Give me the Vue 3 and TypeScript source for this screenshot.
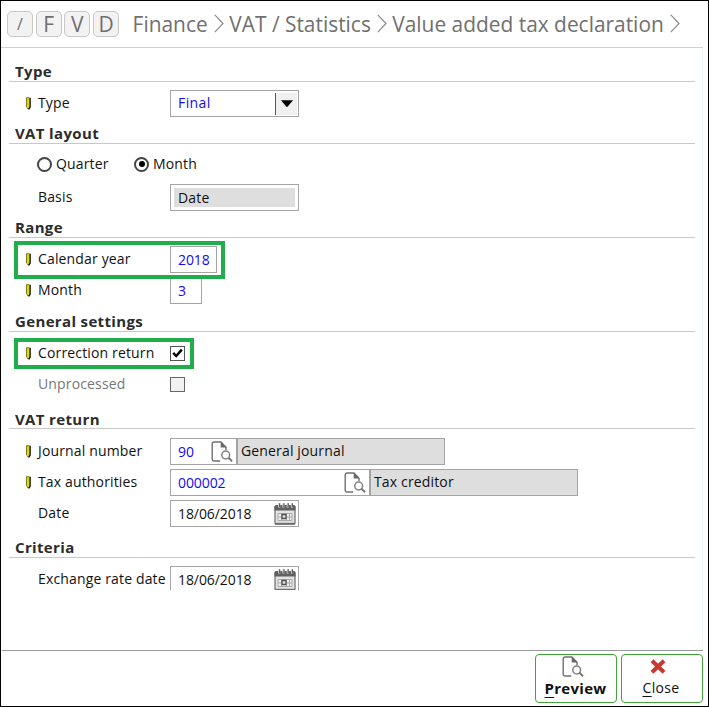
<script setup lang="ts">
import { ref } from 'vue'

const keys = ['/', 'F', 'V', 'D']
const crumbs = [
  { text: 'Finance', cls: 'c1' },
  { text: 'VAT / Statistics', cls: 'c2' },
  { text: 'Value added tax declaration', cls: 'c3' },
]
const period = ref<'quarter' | 'month'>('month')
const correction = ref(true)
</script>

<template>
  <svg class="defs" width="0" height="0" aria-hidden="true">
    <symbol id="pencil" viewBox="0 0 5 13">
      <path d="M.4.5H4v9.2L2.4 12.5.4 10Z" fill="#e0d800" />
      <path d="M.5 10V.7H3M1 10.5l1.2 1.7" fill="none" stroke="#66620c" stroke-width=".8" />
      <path d="M4.1 .8v9.4L2.6 12.3" fill="none" stroke="#000" stroke-width="1.3" />
    </symbol>
    <symbol id="lookup" viewBox="0 0 22 22">
      <path d="M9.2 20H3.2Q1.2 20 1.2 18V3Q1.2 1 3.2 1H10L15 6.2V9" fill="none" stroke="#707070" stroke-width="1.4" />
      <path d="M9.7.8V6.6H15.6Z" fill="#686868" />
      <circle cx="14.7" cy="14" r="3.9" fill="#fff" stroke="#808080" stroke-width="1.5" />
      <path d="M17.5 16.8 21 20.2" stroke="#777" stroke-width="2" />
    </symbol>
    <symbol id="calendar" viewBox="0 0 22 22">
      <path d="M2.5 3H19.5Q21 3 21 4.5V20Q21 21 20 21H2Q1 21 1 20V4.5Q1 3 2.5 3Z" fill="#e2e2e2" stroke="#777" stroke-width="1.3" />
      <path d="M.5 3.5Q.5 2 2.5 2H19.5Q21.5 2 21.5 3.5V7.5H.5Z" fill="#606060" />
      <path d="M5.2 0v4.5M9.5 0v4.5M13.8 0v4.5M18 0v4.5" stroke="#ddd" stroke-width="2.2" />
      <path d="M5.6.3v4M9.9.3v4M14.2.3v4M18.4.3v4" stroke="#606060" stroke-width="1.3" />
      <path d="M1 20.7H21" stroke="#707070" stroke-width="1.8" />
      <path d="M4 10.5H18V17.5H4ZM4 14H18M7.5 10.5V17.5M12.5 10.5V17.5M15.5 10.5V17.5" fill="#eee" stroke="#aaa" stroke-width="1" />
      <path d="M8 11.5h4v4H8Z" fill="#ddd" stroke="#555" stroke-width="1.3" />
    </symbol>
  </svg>

  <main class="window">
    <header class="header">
      <div class="keys">
        <span v-for="k in keys" :key="k" class="key" :class="{ slash: k === '/' }">{{ k }}</span>
      </div>
      <nav class="crumbs">
        <div v-for="c in crumbs" :key="c.text" class="crumb" :class="c.cls">
          <span>{{ c.text }}</span>
          <svg class="chevron" viewBox="0 0 10 19"><path d="M.8.8 9 9.5.8 18.2" fill="none" stroke="#8a8a8a" stroke-width="1.2" /></svg>
        </div>
      </nav>
    </header>

    <div class="form">
      <h2 class="first">Type</h2>
      <div class="row type-row">
        <svg class="pencil"><use href="#pencil" /></svg>
        <label>Type</label>
        <div class="field wide"><span class="blue type-value">Final</span><span class="drop"><svg viewBox="0 0 12 7"><path d="M0 .3H12L6.6 6.7H5.4Z" /></svg></span></div>
      </div>

      <h2>VAT layout</h2>
      <div class="radios">
        <span class="choice quarter" @click="period = 'quarter'"><i class="radio" :class="{ on: period === 'quarter' }"></i>Quarter</span>
        <span class="choice" @click="period = 'month'"><i class="radio" :class="{ on: period === 'month' }"></i>Month</span>
      </div>
      <div class="row basis-row">
        <span class="pencil"></span>
        <label>Basis</label>
        <div class="field wide inset"><span>Date</span></div>
      </div>

      <h2 class="range-head">Range</h2>
      <div class="row year-row">
        <svg class="pencil"><use href="#pencil" /></svg>
        <label>Calendar year</label>
        <div class="field year"><span class="blue num">2018</span></div>
        <div class="mark mark-year"></div>
      </div>
      <div class="row next-row">
        <svg class="pencil"><use href="#pencil" /></svg>
        <label>Month</label>
        <div class="field month"><span class="blue num">3</span></div>
      </div>

      <h2 class="general-head">General settings</h2>
      <div class="row corr-row">
        <svg class="pencil"><use href="#pencil" /></svg>
        <label>Correction return</label>
        <span class="check" @click="correction = !correction">
          <svg v-if="correction" viewBox="0 0 11 11"><path d="M1.2 4.8 4.2 8 9.8 1.7" fill="none" stroke="#000" stroke-width="2.5" /></svg>
        </span>
        <div class="mark mark-corr"></div>
      </div>
      <div class="row next-row off">
        <span class="pencil"></span>
        <label>Unprocessed</label>
        <span class="check"></span>
      </div>

      <h2 class="return-head">VAT return</h2>
      <div class="row journal-row">
        <svg class="pencil"><use href="#pencil" /></svg>
        <label>Journal number</label>
        <div class="field journal"><span class="blue num">90</span><svg class="lookup"><use href="#lookup" /></svg></div>
        <div class="desc">General journal</div>
      </div>
      <div class="row next-row">
        <svg class="pencil"><use href="#pencil" /></svg>
        <label>Tax authorities</label>
        <div class="field tax"><span class="blue num">000002</span><svg class="lookup"><use href="#lookup" /></svg></div>
        <div class="desc">Tax creditor</div>
      </div>
      <div class="row next-row">
        <span class="pencil"></span>
        <label>Date</label>
        <div class="field wide"><span class="num">18/06/2018</span><svg class="cal"><use href="#calendar" /></svg></div>
      </div>

      <h2 class="criteria-head">Criteria</h2>
      <div class="row exchange-row">
        <span class="pencil"></span>
        <label>Exchange rate date</label>
        <div class="field wide"><span class="num">18/06/2018</span><svg class="cal"><use href="#calendar" /></svg></div>
      </div>
    </div>

    <footer class="footer">
      <button class="preview">
        <svg class="lookup"><use href="#lookup" /></svg>
        <span><u>P</u>review</span>
      </button>
      <button class="close">
        <svg class="cross" viewBox="0 0 16 15"><path d="M2 1.8 14 13.2M14 1.8 2 13.2" stroke="#c6392b" stroke-width="4" /></svg>
        <span><u>C</u>lose</span>
      </button>
    </footer>
  </main>
</template>

<style>
body { margin: 0; background: #fff; }
</style>

<style scoped>
* { box-sizing: border-box; }
.defs { display: block; }
.window {
  width: 709px; height: 707px; border: 1px solid #000; background: #fff;
  display: flex; flex-direction: column; overflow: hidden;
  font-family: "Open Sans", "Noto Sans", sans-serif; font-size: 14px; letter-spacing: .15px; color: #111;
}
.header {
  height: 47px; flex: none; margin-right: 5px; padding: 0 0 1px 6px;
  border-bottom: 1px solid #d0d0d0; display: flex; align-items: center; color: #707070; letter-spacing: 0;
}
.keys { display: flex; gap: 2.7px; width: 125.6px; flex: none; }
.key {
  width: 26px; height: 26px; border: 1px solid #c8c8c8; border-radius: 5px; background: #f2f2f2;
  display: flex; align-items: center; justify-content: center; font-size: 21px; line-height: 24px;
}
.key.slash { font-size: 16px; }
.crumbs { display: flex; font-size: 20.9px; line-height: 26px; white-space: nowrap; }
.crumb { display: flex; align-items: center; justify-content: space-between; }
.crumb.c1 { width: 91px; margin-right: 5.7px; }
.crumb.c2 { width: 158px; margin-right: 5px; }
.crumb.c3 { width: 288px; }
.chevron { width: 10px; height: 19px; }
.form {
  height: 602px; flex: none; margin-right: 5px; padding: 0 7px 0 8px; border-right: 1px solid #eef6f8;
}
h2 {
  margin: 0; height: 27px; padding: 6px 0 0 6px; border-bottom: 1px solid #c8c8c8;
  font-size: 15px; line-height: 21px; font-weight: 700; color: #2c2c2c; letter-spacing: .35px;
}
h2.first { height: 34px; padding-top: 13px; }
h2.general-head { height: 28px; padding-top: 7px; }
.row { position: relative; height: 27px; display: flex; align-items: center; padding-left: 17px; }
.pencil { width: 5px; height: 13px; flex: none; }
label { width: 139px; padding-left: 7px; padding-bottom: 2px; white-space: nowrap; }
.type-row { margin-top: 8px; }
.radios { height: 26px; margin-top: 7px; padding-left: 28px; display: flex; align-items: center; }
.choice { display: flex; align-items: center; gap: 4px; line-height: 18px; }
.quarter { width: 97px; }
.radio {
  width: 15px; height: 15px; border: 2px solid #444; border-radius: 50%; background: #fff;
  display: flex; align-items: center; justify-content: center;
}
.radio.on::after { content: ""; width: 6px; height: 6px; border-radius: 50%; background: #000; }
.basis-row { margin-top: 7px; }
.year-row { margin-top: 8px; }
.next-row { margin-top: 4px; }
.corr-row { margin-top: 8px; }
h2.return-head { height: 31px; padding-top: 11px; }
.journal-row { margin-top: 9px; }
h2.criteria-head { height: 31px; padding-top: 10px; }
.exchange-row { margin-top: 8px; height: 24px; align-items: flex-start; overflow: hidden; }
.exchange-row label { line-height: 26px; padding-bottom: 0; }
.field {
  height: 27px; flex: none; border: 1px solid #a4a4a4; background: #fff; padding-left: 7px;
  display: flex; align-items: center; justify-content: space-between; line-height: 25px;
}
.num { letter-spacing: -.08px; }
.blue { color: #1408f8; }
.type-value { letter-spacing: .4px; padding-bottom: 1px; line-height: 24px; }
.wide { width: 129px; }
.year { width: 47px; }
.month { width: 32px; }
.journal { width: 67px; }
.tax { width: 200px; }
.inset { padding: 3px; }
.inset span { flex: 1; height: 19px; padding-left: 4px; background: #dedede; line-height: 20px; }
.drop {
  width: 22px; height: 22px; margin-right: 1px; border-left: 1px solid #555; background: #f0f0f0;
  display: flex; align-items: center; justify-content: center;
}
.drop svg { width: 12px; height: 7px; }
.lookup { width: 22px; height: 22px; flex: none; margin-right: 3px; }
.cal { width: 22px; height: 22px; margin-right: 2px; }
.desc {
  width: 208px; height: 27px; padding-left: 3px; border: 1px solid #a4a4a4; background: #dedede; line-height: 24px;
}
.check { width: 15px; height: 15px; border: 1px solid #555; background: #fff; padding: 1px; display: flex; }
.check svg { width: 11px; height: 11px; }
.off { color: #777; }
.off .check { background: #f2f2f2; border-color: #666; }
.mark { position: absolute; border: 4px solid #1fae4b; }
.mark-year { left: 5px; top: -5px; width: 211px; height: 38px; z-index: 1; }
.mark-corr { left: 5px; top: -2px; width: 180px; height: 31px; }
.footer {
  flex: 1; margin: 0 5px 0 1px; padding-top: 3px; border-top: 1px solid #999;
  display: flex; align-items: flex-start; justify-content: flex-end; gap: 4px;
}
button {
  width: 82px; height: 49px; padding: 1px 2px 0 0; border: 1px solid #3fa535; border-radius: 4px; background: #fff;
  display: flex; flex-direction: column; align-items: center; font: 14px/20px "Open Sans", sans-serif; color: #111;
  letter-spacing: .35px;
}
button .lookup { margin: 0 6px 0 0; }
.preview { padding-right: 1px; font-weight: 700; font-size: 15px; letter-spacing: .3px; }
.cross { width: 16px; height: 15px; margin: 3px 6px 4px 0; }
u { text-underline-offset: 3px; }
</style>
